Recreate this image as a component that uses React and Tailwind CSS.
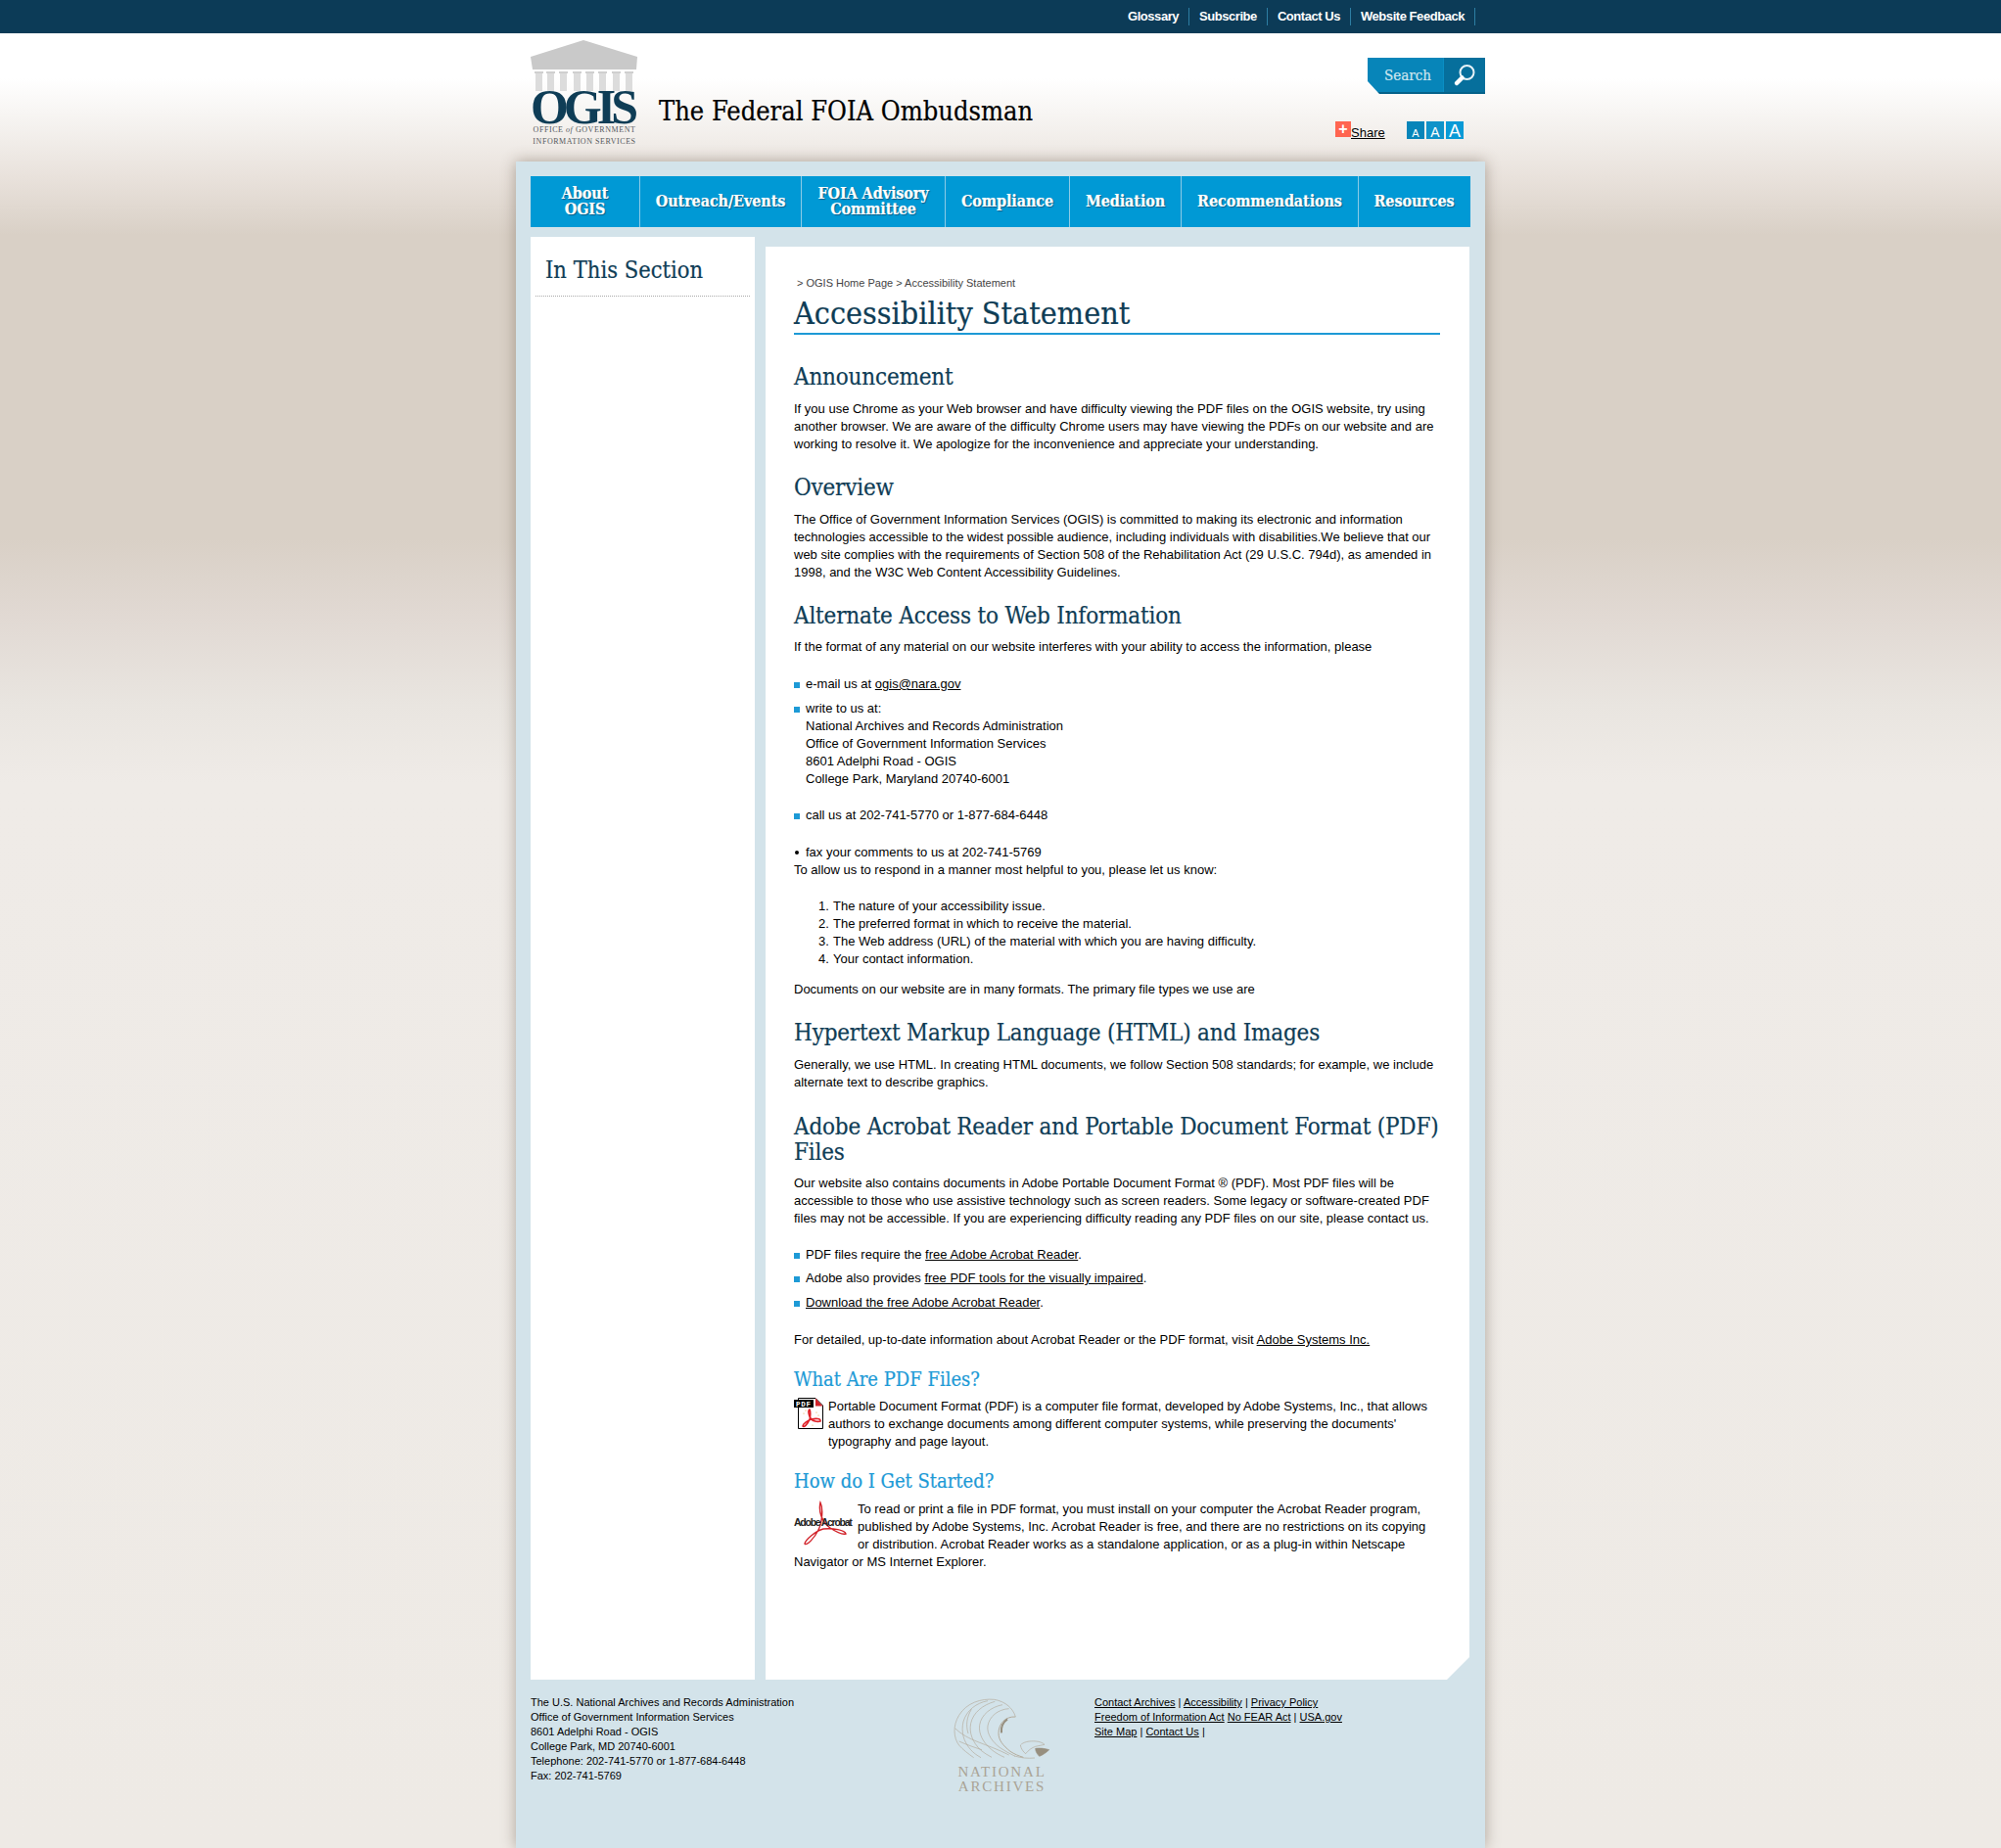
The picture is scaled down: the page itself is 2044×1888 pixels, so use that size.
const slab = "font-['DejaVu_Serif_Condensed','DejaVu_Serif',serif] [-webkit-text-stroke:0.2px]";

const navItems = [
  { w: 'w-[112px]', label: ['About', 'OGIS'] },
  { w: 'w-[165px]', label: ['Outreach/Events'] },
  { w: 'w-[147px]', label: ['FOIA Advisory', 'Committee'] },
  { w: 'w-[127px]', label: ['Compliance'] },
  { w: 'w-[114px]', label: ['Mediation'] },
  { w: 'w-[181px]', label: ['Recommendations'] },
  { w: 'w-[113px]', label: ['Resources'] },
];

function A({ children }) {
  return <a className="text-black underline">{children}</a>;
}

function Bullet({ children, className = '' }) {
  return (
    <li className={`relative pl-3 ${className}`}>
      <span className="absolute left-0 top-[7px] w-[6px] h-[6px] bg-[#1d9ad6]" />
      {children}
    </li>
  );
}

function H2({ children, className = '' }) {
  return <h2 className={`${slab} text-[24px] leading-[26px] tracking-[-0.2px] text-[#0f3d56] ${className}`}>{children}</h2>;
}

function H3({ children, className = '' }) {
  return <h3 className={`${slab} text-[20px] leading-[24px] text-[#1d9ad6] ${className}`}>{children}</h3>;
}

function Logo() {
  return (
    <div className="w-[112px] h-[112px] flex flex-col items-center">
      <svg width="112" height="53" viewBox="0 0 112 53" className="shrink-0">
        <polygon points="55,1 110,18 109,31 3,31 1,18" fill="#c9c9c9" />
        {[6, 18, 31, 45, 58, 71, 85, 98].map((x) => (
          <g key={x}>
            <rect x={x - 1} y="33" width="9" height="2" fill="#cfcfcf" />
            <rect x={x} y="35" width="7" height="18" fill="#dcdcdc" />
          </g>
        ))}
      </svg>
      <div className="font-['Liberation_Serif',serif] font-bold text-[50px] h-[34px] leading-[33px] tracking-[-5px] pr-[5px] text-[#0f3d56]">OGIS</div>
      <div className="font-['Liberation_Serif',serif] text-[8px] leading-[11.5px] tracking-[0.55px] text-[#55595c] text-center whitespace-nowrap">
        <div>OFFICE <i>of</i> GOVERNMENT</div>
        <div>INFORMATION SERVICES</div>
      </div>
    </div>
  );
}

function PdfIcon() {
  return (
    <svg width="30" height="32" viewBox="0 0 30 32" className="shrink-0">
      <polygon points="4.5,0.5 22,0.5 29.5,8 29.5,31.5 4.5,31.5" fill="#fff" stroke="#000" />
      <polygon points="22,0.5 29.5,8.5 22,8.5" fill="#d2232a" />
      <rect x="0" y="2" width="20" height="8" fill="#000" />
      <text x="2" y="8.7" fontSize="7.5" fontWeight="bold" letterSpacing="0.7" fill="#fff" fontFamily="Liberation Mono">PDF</text>
      <path d="M16 12c-2 1-1 6 1 9 2 3 7 4 10 3 1-3-5-3-9-2-4 1-9 5-9 7 1 2 5-2 7-7 1-3 1-9 0-10z" fill="none" stroke="#e01f26" strokeWidth="1.6" />
      <circle cx="10" cy="16" r="0.6" fill="#e9a23b" />
      <circle cx="12" cy="13" r="0.6" fill="#e9a23b" />
      <circle cx="23" cy="15" r="0.6" fill="#e9a23b" />
      <circle cx="25" cy="18" r="0.6" fill="#e9a23b" />
      <circle cx="19" cy="28" r="0.6" fill="#e9a23b" />
    </svg>
  );
}

function AdobeLogo() {
  return (
    <div className="float-left relative w-[58px] h-[44px] mr-[7px]">
      <svg width="58" height="48" viewBox="0 0 58 48" className="absolute left-0 top-0">
        <path d="M27 2C25 10 28 22 37 28 43 32 50 35 53 34 52 30 40 28 30 29 22 31 12 40 11 44 13 47 21 38 25 30 29 22 30 8 27 2z" fill="none" stroke="#d2232a" strokeWidth="1.4" />
      </svg>
      <span className="absolute left-0 top-[15px] font-['Liberation_Sans',sans-serif] font-bold text-[10.5px] leading-[14px] tracking-[-1.25px] text-[#222] whitespace-nowrap">Adobe Acrobat</span>
    </div>
  );
}

function Eagle() {
  return (
    <svg width="102" height="66" viewBox="42 25 306 198" fill="none" stroke="#b3ab9b" strokeWidth="2">
      <path d="M235 85C228 60 205 38 170 32 130 28 85 42 62 80 42 112 45 150 62 172c12 14 28 26 45 38" />
      <path d="M150 36C115 42 85 65 75 100c-7 30 0 60 22 85 8 10 20 18 32 25" />
      <path d="M172 38C135 48 105 72 98 105c-6 30 6 58 30 82 10 8 22 16 34 22" />
      <path d="M195 48C160 55 130 78 125 110c-4 28 12 55 36 75 12 10 26 18 40 24" />
      <path d="M215 60C180 62 155 85 150 112c-4 25 14 50 38 68 14 10 30 18 46 26" />
      <path d="M235 85c-30-2-52 20-52 50 0 22 14 38 36 56 12 8 26 14 40 18" strokeWidth="3" />
      <path d="M210 92c-14 10-20 26-18 42" stroke="#978f7f" strokeWidth="6" />
      <path d="M50 120c20 20 45 32 70 42 30 12 60 22 95 40M62 160c22 10 45 18 70 26M100 62c-14 22-18 48-10 74" />
      <path d="M250 172c8-10 28-14 48-12 10 1 20 4 26 10l-28 6c-12 4-22 12-30 22-8-6-14-16-16-26z" />
      <path d="M296 182c14-2 30 0 42 4-8 8-20 16-30 20-6-6-12-14-12-24z" fill="#978f7f" stroke="#978f7f" />
      <path d="M232 205c20 6 40 8 62 6" />
    </svg>
  );
}

export default function App() {
  return (
    <div className="min-h-[1888px] font-['Liberation_Sans',sans-serif] text-[13px] leading-[18px] text-black bg-[linear-gradient(to_bottom,#ffffff_0px,#ffffff_80px,#f4f1ee_130px,#e9e2dc_180px,#d9d0c6_240px,#d9d0c6_550px,#e1d9d3_630px,#e9e5e0_720px,#efebe7_800px,#eeeae5_100%)]">
      <div className="h-[34px] bg-[#0c3b57]">
        <div className="w-[990px] mx-auto flex justify-end pr-[10px] pt-[8px]">
          {['Glossary', 'Subscribe', 'Contact Us', 'Website Feedback'].map((t) => (
            <a key={t} className="h-[18px] px-[10px] border-r border-[#2d7ea3] text-white font-bold text-[13px] leading-[18px] tracking-[-0.45px]">{t}</a>
          ))}
        </div>
      </div>

      <div className="w-[990px] mx-auto h-[131px] relative px-[14px] pt-[6px] flex">
        <Logo />
        <div className={`${slab} text-[27px] leading-[30px] ml-[20px] mt-[59px] whitespace-nowrap`}>The Federal FOIA Ombudsman</div>
        <div className="absolute right-0 top-[25px] w-[120px] h-[37px] flex border-b-2 border-[#05628a] [clip-path:polygon(0_0,100%_0,100%_100%,12px_100%,0_24px)]">
          <div className={`${slab} w-[77px] bg-[#0785b9] text-[#cfe6ef] text-[15px] leading-[36px] pl-[17px]`}>Search</div>
          <div className="flex-1 bg-[#066f9c] border-l border-[#0a8fc4] flex items-center justify-center">
            <svg width="26" height="26" viewBox="0 0 26 26" fill="none">
              <circle cx="15.5" cy="10" r="7" stroke="#e6f2f7" strokeWidth="2" />
              <path d="M10.5 15.5L5 21" stroke="#fff" strokeWidth="4.5" strokeLinecap="round" />
            </svg>
          </div>
        </div>
        <div className="absolute left-[837px] top-[90px] flex">
          <span className="w-[16px] h-[16px] bg-[#ff6550] text-white font-bold text-[16px] leading-[15px] text-center">+</span>
          <a className="text-black underline text-[13px] leading-[18px] mt-[3px]">Share</a>
        </div>
        <div className="absolute left-[910px] top-[90px] flex gap-[2px]">
          <span className="w-[18px] h-[18px] bg-[#0785b9] text-white text-[11px] leading-[24px] text-center">A</span>
          <span className="w-[18px] h-[18px] bg-[#0f93c9] text-white text-[14px] leading-[22px] text-center">A</span>
          <span className="w-[18px] h-[18px] bg-[#0a9ad6] text-white text-[18px] leading-[20px] text-center">A</span>
        </div>
      </div>

      <div className="w-[990px] h-[1723px] mx-auto bg-[#d3e3ea] shadow-[0_0_14px_rgba(90,75,60,0.45)] px-[15px] pt-[15px]">
        <nav className="flex h-[52px] bg-[#0099d5] text-white">
          {navItems.map((item, i) => (
            <a key={i} className={`${item.w} ${slab} ${i < 6 ? 'border-r border-[#8ccbe6]' : ''} flex flex-col items-center justify-center font-bold text-[16px] leading-[16px] tracking-[-0.1px] [text-shadow:1px_1px_1px_rgba(0,50,80,0.6)]`}>
              {item.label.map((l) => <span key={l} className="whitespace-nowrap">{l}</span>)}
            </a>
          ))}
        </nav>

        <div className="flex mt-[10px] h-[1474px]">
          <aside className="w-[229px] bg-white">
            <h3 className={`${slab} text-[23.5px] leading-[26px] text-[#0f3d56] pl-[15px] pt-[21px] pb-[13px]`}>In This Section</h3>
            <div className="mx-[5px] border-b border-dotted border-[#aaa] h-0" />
          </aside>

          <main className="w-[719px] ml-[11px] mt-[10px] bg-white pl-[29px] pr-[30px] pt-[28px] [clip-path:polygon(0_0,100%_0,100%_calc(100%-23px),calc(100%-23px)_100%,0_100%)]">
            <div className="text-[11px] leading-[18px] text-[#444] pl-[3px]">&gt; OGIS Home Page &gt; Accessibility Statement</div>
            <h1 className={`${slab} text-[32px] leading-[38px] text-[#0f3d56] border-b-2 border-[#1d9ad6] pt-[2px] pb-[1px] mt-[1px]`}>Accessibility Statement</h1>

            <H2 className="mt-[30px]">Announcement</H2>
            <p className="mt-[11px]">If you use Chrome as your Web browser and have difficulty viewing the PDF files on the OGIS website, try using another browser. We are aware of the difficulty Chrome users may have viewing the PDFs on our website and are working to resolve it. We apologize for the inconvenience and appreciate your understanding.</p>

            <H2 className="mt-[22px]">Overview</H2>
            <p className="mt-[11px]">The Office of Government Information Services (OGIS) is committed to making its electronic and information technologies accessible to the widest possible audience, including individuals with disabilities.We believe that our web site complies with the requirements of Section 508 of the Rehabilitation Act (29 U.S.C. 794d), as amended in 1998, and the W3C Web Content Accessibility Guidelines.</p>

            <H2 className="mt-[22px]">Alternate Access to Web Information</H2>
            <p className="mt-[10px]">If the format of any material on our website interferes with your ability to access the information, please</p>

            <ul className="mt-[20px]">
              <Bullet>e-mail us at <A>ogis@nara.gov</A></Bullet>
              <Bullet className="mt-[7px]">write to us at:<br />National Archives and Records Administration<br />Office of Government Information Services<br />8601 Adelphi Road - OGIS<br />College Park, Maryland 20740-6001<br /><br /></Bullet>
              <Bullet className="mt-[1px]">call us at 202-741-5770 or 1-877-684-6448<br /><br /></Bullet>
              <li className="relative pl-3 mt-[2px]">
                <span className="absolute left-[1px] top-[7px] w-[4px] h-[4px] rounded-full bg-black" />
                fax your comments to us at 202-741-5769
              </li>
            </ul>
            <p>To allow us to respond in a manner most helpful to you, please let us know:</p>

            <ol className="mt-[19px] pl-[40px]">
              {['The nature of your accessibility issue.', 'The preferred format in which to receive the material.', 'The Web address (URL) of the material with which you are having difficulty.', 'Your contact information.'].map((t, i) => (
                <li key={t} className="relative">
                  <span className="absolute left-[-15px]">{i + 1}.</span>{t}
                </li>
              ))}
            </ol>
            <p className="mt-[13px]">Documents on our website are in many formats. The primary file types we use are</p>

            <H2 className="mt-[22px]">Hypertext Markup Language (HTML) and Images</H2>
            <p className="mt-[11px]">Generally, we use HTML. In creating HTML documents, we follow Section 508 standards; for example, we include alternate text to describe graphics.</p>

            <H2 className="mt-[23px]">Adobe Acrobat Reader and Portable Document Format (PDF) Files</H2>
            <p className="mt-[10px]">Our website also contains documents in Adobe Portable Document Format ® (PDF). Most PDF files will be accessible to those who use assistive technology such as screen readers. Some legacy or software-created PDF files may not be accessible. If you are experiencing difficulty reading any PDF files on our site, please contact us.</p>

            <ul className="mt-[19px]">
              <Bullet>PDF files require the <A>free Adobe Acrobat Reader</A>.</Bullet>
              <Bullet className="mt-[6px]">Adobe also provides <A>free PDF tools for the visually impaired</A>.</Bullet>
              <Bullet className="mt-[7px]"><A>Download the free Adobe Acrobat Reader</A>.</Bullet>
            </ul>
            <p className="mt-[20px]">For detailed, up-to-date information about Acrobat Reader or the PDF format, visit <A>Adobe Systems Inc.</A></p>

            <H3 className="mt-[19px]">What Are PDF Files?</H3>
            <div className="flex gap-[5px] mt-[7px]">
              <PdfIcon />
              <p className="pr-[10px]">Portable Document Format (PDF) is a computer file format, developed by Adobe Systems, Inc., that allows authors to exchange documents among different computer systems, while preserving the documents' typography and page layout.</p>
            </div>

            <H3 className="mt-[19px]">How do I Get Started?</H3>
            <div className="mt-[8px]">
              <AdobeLogo />
              <p>To read or print a file in PDF format, you must install on your computer the Acrobat Reader program, published by Adobe Systems, Inc. Acrobat Reader is free, and there are no restrictions on its copying or distribution. Acrobat Reader works as a standalone application, or as a plug-in within Netscape Navigator or MS Internet Explorer.</p>
            </div>
          </main>
        </div>

        <footer className="flex text-[11px] leading-[15px] pt-[16px]">
          <div className="w-[429px] shrink-0">
            <div>The U.S. National Archives and Records Administration</div>
            <div>Office of Government Information Services</div>
            <div>8601 Adelphi Road - OGIS</div>
            <div>College Park, MD 20740-6001</div>
            <div>Telephone: 202-741-5770 or 1-877-684-6448</div>
            <div>Fax: 202-741-5769</div>
          </div>
          <div className="w-[147px] shrink-0 flex flex-col items-center pr-[42px] mt-[2px]">
            <Eagle />
            <div className="font-['Liberation_Serif',serif] text-[15px] leading-[15px] tracking-[1.8px] text-[#aaa496] text-center mt-[3px] whitespace-nowrap">NATIONAL<br />ARCHIVES</div>
          </div>
          <div>
            <div><A>Contact Archives</A> | <A>Accessibility</A> | <A>Privacy Policy</A></div>
            <div><A>Freedom of Information Act</A> <A>No FEAR Act</A> | <A>USA.gov</A></div>
            <div><A>Site Map</A> | <A>Contact Us</A> <u>|</u></div>
          </div>
        </footer>
      </div>
    </div>
  );
}
